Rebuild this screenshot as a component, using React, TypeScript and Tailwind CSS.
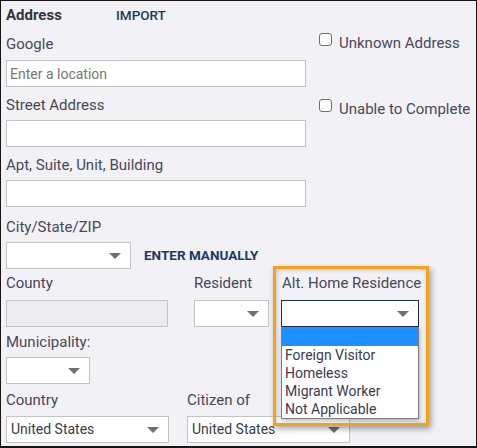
import React from "react";

const Caret = () => (
  <svg width="12" height="6" viewBox="0 0 12 6" className="shrink-0">
    <path d="M0 0h12L6 6z" fill="#707070" />
  </svg>
);

const Label = ({
  children,
  className = "",
}: {
  children: React.ReactNode;
  className?: string;
}) => (
  <div className={`whitespace-nowrap text-[15px] leading-[20px] text-[#48485a] ${className}`}>
    {children}
  </div>
);

const SelectBox = ({
  value = "",
  className = "",
}: {
  value?: string;
  className?: string;
}) => (
  <div
    className={`flex h-[27px] items-center justify-between border border-[#c4c4c4] bg-white pl-[4px] pr-[9px] text-[14px] text-[#3b3b4c] ${className}`}
  >
    <span className="truncate">{value}</span>
    <Caret />
  </div>
);

const TextBox = ({ placeholder = "" }: { placeholder?: string }) => (
  <input
    type="text"
    placeholder={placeholder}
    className="block h-[27px] w-[300px] border border-[#c4c4c4] bg-white px-[3px] text-[14px] text-[#3b3b4c] outline-none placeholder:text-[#777]"
  />
);

const Check = ({ label, className = "" }: { label: string; className?: string }) => (
  <label className={`flex items-start ${className}`}>
    <span className="h-[13px] w-[13px] rounded-[3px] border border-[#6e6e6e] bg-white" />
    <span className="ml-[7px] whitespace-nowrap text-[15px] leading-[20px] text-[#48485a]">
      {label}
    </span>
  </label>
);

const altOptions = ["Foreign Visitor", "Homeless", "Migrant Worker", "Not Applicable"];

export default function App() {
  return (
    <div className="h-[448px] w-[477px] overflow-hidden border border-b-2 border-[#151515] bg-[#f1f1f6] pl-[5px] pt-[4px] font-['Roboto',sans-serif]">
      {/* header */}
      <div className="flex h-[20px] items-center">
        <div className="w-[110px] text-[15px] font-bold text-[#34343f]">Address</div>
        <button className="text-[13.5px] font-medium text-[#1d3a5f]">IMPORT</button>
      </div>

      {/* top fields + flags */}
      <div className="flex">
        <div className="w-[300px]">
          <Label className="mt-[9px]">Google</Label>
          <div className="mt-[6px]">
            <TextBox placeholder="Enter a location" />
          </div>
          <Label className="mt-[8px]">Street Address</Label>
          <div className="mt-[5px]">
            <TextBox />
          </div>
          <Label className="mt-[8px]">Apt, Suite, Unit, Building</Label>
          <div className="mt-[5px]">
            <TextBox />
          </div>
        </div>
        <div className="ml-[13px]">
          <Check label="Unknown Address" className="mt-[8px]" />
          <Check label="Unable to Complete" className="mt-[46px]" />
        </div>
      </div>

      <Label className="mt-[10px]">City/State/ZIP</Label>
      <div className="mt-[5px] flex items-center">
        <SelectBox className="w-[125px]" />
        <button className="ml-[13px] text-[13.5px] font-bold text-[#1d3a5f]">
          ENTER MANUALLY
        </button>
      </div>

      {/* county / resident / alt home */}
      <div className="mt-[4px] flex">
        <div className="w-[162px]">
          <Label>County</Label>
          <div className="mt-[7px] h-[27px] border border-[#c4c4c4] bg-[#ececf0]" />
        </div>
        <div className="ml-[26px] w-[75px]">
          <Label>Resident</Label>
          <SelectBox className="mt-[7px] w-[75px]" />
        </div>
        <div className="relative z-10 ml-[12px] w-[138px]">
          <Label className="pl-[1px]">Alt. Home Residence</Label>
          <div className="relative mt-[7px]">
            <div className="flex h-[27px] items-center justify-end border border-[#1e2f4c] bg-white pr-[9px]">
              <Caret />
            </div>
            <ul className="absolute left-0 top-full w-[138px] border border-[#7d7d7d] bg-white text-[14px] leading-[18px] text-[#3b3b50] shadow-[1px_2px_4px_rgba(0,0,0,0.25)]">
              <li className="h-[18px] bg-[#1e90ff]" />
              {altOptions.map((o) => (
                <li key={o} className="h-[18px] pl-[3px]">
                  {o}
                </li>
              ))}
            </ul>
          </div>
          <div className="pointer-events-none absolute -left-[8px] -top-[7px] h-[160px] w-[156px] border-[3px] border-[#f7a11a] shadow-[2px_3px_6px_rgba(0,0,0,0.35),inset_1px_1px_4px_rgba(0,0,0,0.2)]" />
        </div>
      </div>

      <Label className="mt-[5px]">Municipality:</Label>
      <SelectBox className="mt-[5px] w-[84px]" />

      {/* country / citizen */}
      <div className="mt-[6px] flex">
        <div className="w-[163px]">
          <Label>Country</Label>
          <SelectBox value="United States" className="mt-[6px] w-[163px]" />
        </div>
        <div className="ml-[18px] w-[163px]">
          <Label>Citizen of</Label>
          <SelectBox value="United States" className="mt-[6px] w-[163px]" />
        </div>
      </div>
    </div>
  );
}
